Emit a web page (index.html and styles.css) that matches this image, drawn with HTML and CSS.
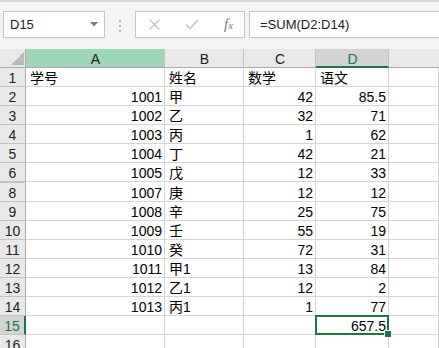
FILE: index.html
```html
<!DOCTYPE html>
<html lang="zh-CN">
<head>
    <meta charset="UTF-8">
    <meta name="viewport" content="width=device-width, initial-scale=1.0">
    <title>成绩表 - D15</title>
    <link rel="stylesheet" href="styles.css">
</head>
<body>
    <div class="toolbar">
        <div class="namebox">
            <span>D15</span>
            <svg class="drop" width="8" height="5" viewBox="0 0 8 5"><polygon points="0,0 8,0 4,4.5" fill="#7a7a7a"/></svg>
        </div>
        <div class="grip"><i></i><i></i><i></i></div>
        <div class="fbtns">
            <svg class="btn-x" width="11" height="11" viewBox="0 0 11 11"><path d="M0.5 0.5 L10.5 10.5 M10.5 0.5 L0.5 10.5" stroke="#c4c4c4" stroke-width="1.4" fill="none"/></svg>
            <svg class="btn-ok" width="14" height="11" viewBox="0 0 14 11"><polyline points="1,5.5 5,9.5 13,1" stroke="#c4c4c4" stroke-width="1.6" fill="none"/></svg>
            <span class="fx"><i>f</i><small>x</small></span>
        </div>
        <div class="formula">=SUM(D2:D14)</div>
    </div>

    <div class="sheet">
        <div class="row head">
            <div class="rh corner"><svg width="13" height="13" viewBox="0 0 13 13"><polygon points="13,0 13,13 0,13" fill="#b9b9b9"/></svg></div>
            <div class="ch hl">A</div>
            <div class="ch">B</div>
            <div class="ch">C</div>
            <div class="ch sel">D</div>
            <div class="ch last"></div>
        </div>
        <div class="row">
            <div class="rh">1</div>
            <div class="c">学号</div><div class="c">姓名</div><div class="c">数学</div><div class="c">语文</div><div class="c"></div>
        </div>
        <div class="row">
            <div class="rh">2</div>
            <div class="c num">1001</div><div class="c">甲</div><div class="c num">42</div><div class="c num">85.5</div><div class="c"></div>
        </div>
        <div class="row">
            <div class="rh">3</div>
            <div class="c num">1002</div><div class="c">乙</div><div class="c num">32</div><div class="c num">71</div><div class="c"></div>
        </div>
        <div class="row">
            <div class="rh">4</div>
            <div class="c num">1003</div><div class="c">丙</div><div class="c num">1</div><div class="c num">62</div><div class="c"></div>
        </div>
        <div class="row">
            <div class="rh">5</div>
            <div class="c num">1004</div><div class="c">丁</div><div class="c num">42</div><div class="c num">21</div><div class="c"></div>
        </div>
        <div class="row">
            <div class="rh">6</div>
            <div class="c num">1005</div><div class="c">戊</div><div class="c num">12</div><div class="c num">33</div><div class="c"></div>
        </div>
        <!-- row 7 hidden -->
        <div class="row after-hidden">
            <div class="rh">8</div>
            <div class="c num">1007</div><div class="c">庚</div><div class="c num">12</div><div class="c num">12</div><div class="c"></div>
        </div>
        <div class="row">
            <div class="rh">9</div>
            <div class="c num">1008</div><div class="c">辛</div><div class="c num">25</div><div class="c num">75</div><div class="c"></div>
        </div>
        <div class="row">
            <div class="rh">10</div>
            <div class="c num">1009</div><div class="c">壬</div><div class="c num">55</div><div class="c num">19</div><div class="c"></div>
        </div>
        <div class="row">
            <div class="rh">11</div>
            <div class="c num">1010</div><div class="c">癸</div><div class="c num">72</div><div class="c num">31</div><div class="c"></div>
        </div>
        <div class="row">
            <div class="rh">12</div>
            <div class="c num">1011</div><div class="c">甲1</div><div class="c num">13</div><div class="c num">84</div><div class="c"></div>
        </div>
        <div class="row">
            <div class="rh">13</div>
            <div class="c num">1012</div><div class="c">乙1</div><div class="c num">12</div><div class="c num">2</div><div class="c"></div>
        </div>
        <div class="row">
            <div class="rh">14</div>
            <div class="c num">1013</div><div class="c">丙1</div><div class="c num">1</div><div class="c num">77</div><div class="c"></div>
        </div>
        <div class="row">
            <div class="rh active">15</div>
            <div class="c"></div><div class="c"></div><div class="c"></div><div class="c num current">657.5</div><div class="c"></div>
        </div>
        <div class="row">
            <div class="rh">16</div>
            <div class="c"></div><div class="c"></div><div class="c"></div><div class="c"></div><div class="c"></div>
        </div>
    </div>
</body>
</html>
```

FILE: styles.css
```css
* {
    box-sizing: border-box;
}
body {
    margin: 0;
    background-color: #ffffff;
    font-family: "Liberation Sans", "Noto Sans CJK SC", sans-serif;
    color: #000;
    overflow: hidden;
}
.toolbar {
    display: flex;
    align-items: flex-start;
    height: 49px;
    padding: 9px 0 0 3px;
    border-top: 2px solid #d9d9d9;
    background-color: #f3f3f3;
    font-size: 13px;
}
.namebox {
    display: flex;
    align-items: center;
    justify-content: space-between;
    width: 102px;
    height: 27px;
    padding: 0 6px 0 6px;
    border: 1px solid #c6c6c6;
    background-color: #fff;
    color: #222;
}
.grip {
    display: flex;
    flex-direction: column;
    align-items: center;
    gap: 3px;
    width: 30px;
    padding-top: 9px;
}
.grip i {
    width: 2px;
    height: 2px;
    background-color: #b3b3b3;
}
.fbtns {
    display: flex;
    align-items: center;
    width: 110px;
    height: 27px;
    padding-left: 13px;
    border: 1px solid #c6c6c6;
    background-color: #fff;
}
.btn-ok {
    margin-left: 25px;
}
.fx {
    margin-left: 25px;
    font-family: "Liberation Serif", serif;
    color: #7a7a7a;
    font-size: 15px;
    line-height: 1;
}
.fx small {
    font-size: 11px;
    font-style: italic;
}
.formula {
    flex: 1;
    height: 27px;
    margin-left: 4px;
    padding-left: 10px;
    border: 1px solid #c6c6c6;
    border-right: none;
    background-color: #fff;
    line-height: 25px;
    color: #222;
}

.row {
    display: grid;
    grid-template-columns: 26px 139px 79px 72px 73px 1fr;
    height: 19px;
    font-size: 14px;
    line-height: 16px;
}
.c, .ch, .rh {
    padding: 2px 3px 0 4px;
    border-right: 1px solid #d6d6d6;
    border-bottom: 1px solid #d6d6d6;
    white-space: nowrap;
    overflow: hidden;
}
.num {
    text-align: right;
    padding-right: 2px;
}
.rh {
    padding: 2px 0 0 0;
    text-align: center;
    background-color: #e9e9e9;
    border-right-color: #ababab;
    border-bottom-color: #c3c3c3;
    color: #222;
}
/* the hidden row 7 leaves a double line in the row header only */
.row.after-hidden {
    height: 20px;
}
.after-hidden .c {
    padding-top: 3px;
}
.after-hidden .rh {
    padding-top: 2px;
    border-top: 1px solid #c3c3c3;
}
.ch {
    text-align: center;
    background-color: #e9e9e9;
    border-right-color: #c3c3c3;
    border-bottom-color: #ababab;
    color: #222;
}
.ch.last {
    border-right: none;
}
.ch.hl {
    background-color: #9fd5b7;
}
.ch.sel {
    background-color: #d3d3d3;
    border-bottom: 2px solid #217346;
    color: #217346;
}
.corner {
    display: flex;
    justify-content: flex-end;
    align-items: flex-end;
    padding: 0 1px 2px 0;
    border-bottom-color: #ababab;
}
.corner svg {
    display: block;
}
.rh.active {
    background-color: #d3d3d3;
    border-right: 2px solid #217346;
    color: #217346;
}
.current {
    position: relative;
    overflow: visible;
}
/* selection frame and fill handle sit on top of the grid lines */
.current::after {
    content: "";
    position: absolute;
    left: -1px;
    top: -1px;
    right: -1px;
    bottom: -1px;
    border: 2px solid #217346;
}
.current::before {
    content: "";
    position: absolute;
    right: -4px;
    bottom: -4px;
    width: 6px;
    height: 6px;
    background-color: #217346;
    border: 1px solid #fff;
    z-index: 1;
}
```
